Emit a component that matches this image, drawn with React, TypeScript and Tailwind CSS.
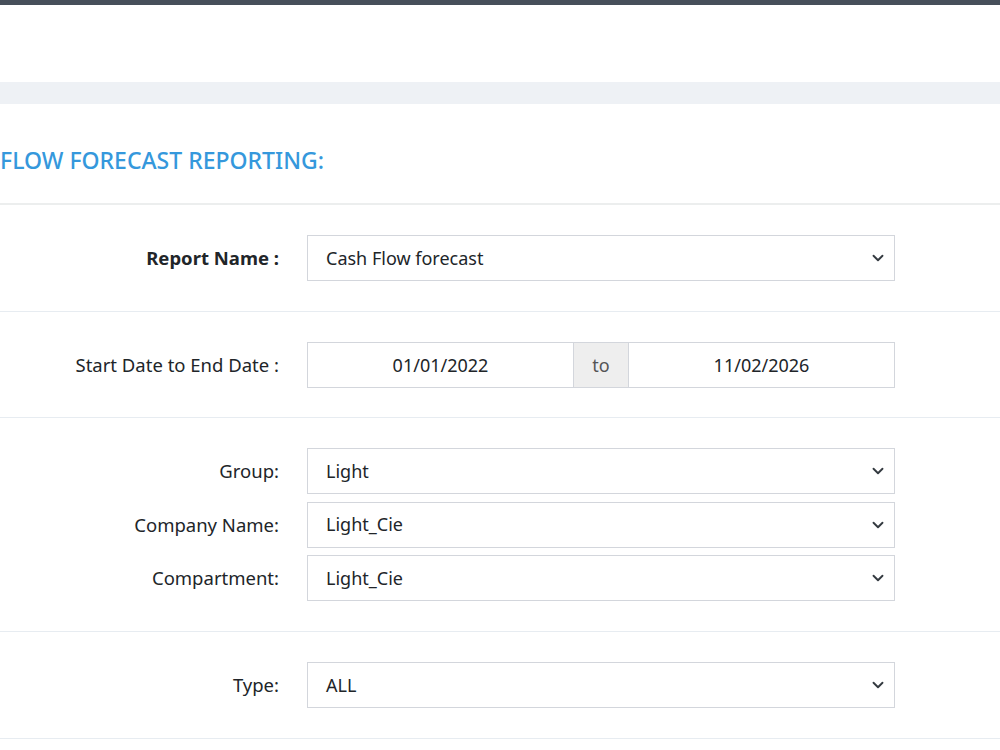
import { ChevronDown } from "lucide-react"

const font = { fontFamily: '"Noto Sans", "Open Sans", sans-serif' }

function Select({ value }: { value: string }) {
    return (
        <div className="flex items-center justify-between h-[46px] w-[588px] border border-[#d3d6dc] bg-white pl-[18px] pr-[7px] text-[18px] text-[#212529]">
            <span>{value}</span>
            <ChevronDown size={18} strokeWidth={2.5} className="text-[#343a40]" />
        </div>
    )
}

function Row({ label, bold, children }: { label: string; bold?: boolean; children: React.ReactNode }) {
    return (
        <div className="flex items-center">
            <div className={`w-[279px] text-right text-[18.5px] text-[#212529] ${bold ? "font-bold" : ""}`}>{label}</div>
            <div className="ml-[28px]">{children}</div>
        </div>
    )
}

export default function App() {
    const groupRows = [
        { label: "Group:", value: "Light" },
        { label: "Company Name:", value: "Light_Cie" },
        { label: "Compartment:", value: "Light_Cie" },
    ]

    return (
        <div style={font} className="w-[1000px] h-[750px] bg-white overflow-hidden">
            <div className="h-[5px] bg-[#474f5a]"></div>
            <div className="h-[77px]"></div>
            <div className="h-[22px] bg-[#eef1f5]"></div>

            <div className="h-[99px] flex items-center">
                <h2 className="text-[23px] font-medium text-[#3598dc] pt-[14px]">FLOW FORECAST REPORTING:</h2>
            </div>

            <div className="border-t-2 border-[#eceeee] py-[30px]">
                <Row label="Report Name :" bold>
                    <Select value="Cash Flow forecast" />
                </Row>
            </div>

            <div className="border-t border-[#e7ecf1] pt-[30px] pb-[29px]">
                <Row label="Start Date to End Date :">
                    <div className="flex h-[46px] w-[588px] border border-[#d3d6dc] text-[18px] text-[#212529]">
                        <div className="w-[265px] flex items-center justify-center">01/01/2022</div>
                        <div className="w-[56px] flex items-center justify-center bg-[#eeeeee] border-x border-[#d3d6dc] text-[#555]">to</div>
                        <div className="flex-1 flex items-center justify-center">11/02/2026</div>
                    </div>
                </Row>
            </div>

            <div className="border-t border-[#e7ecf1] py-[30px] flex flex-col gap-[7.5px]">
                {groupRows.map((r, idx) => (
                    <Row key={idx} label={r.label}>
                        <Select value={r.value} />
                    </Row>
                ))}
            </div>

            <div className="border-t border-[#e7ecf1] py-[30px]">
                <Row label="Type:">
                    <Select value="ALL" />
                </Row>
            </div>

            <div className="border-t border-[#e7ecf1]"></div>
        </div>
    )
}
